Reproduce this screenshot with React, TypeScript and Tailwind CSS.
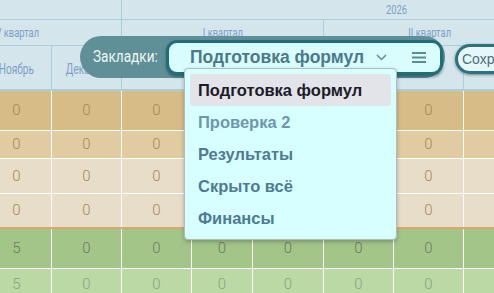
import React from "react";

const W = [70, 70, 70, 61, 71, 70, 70, 70];
const ROBOTO = { fontFamily: 'Roboto, "Liberation Sans", sans-serif' };
const SANS = { fontFamily: '"Liberation Sans", Arial, sans-serif' };

type Row = { h: string; bg: string; color: string; vals: string[]; border: string };

const rows: Row[] = [
  { h: "h-[40px]", bg: "bg-[#d7bc88]", color: "text-[#a48a56]", vals: ["0", "0", "0", "0", "0", "0", "0", ""], border: "border-b border-white" },
  { h: "h-[28px]", bg: "bg-[#e1cca2]", color: "text-[#a48a56]", vals: ["0", "0", "0", "0", "0", "0", "0", ""], border: "border-b border-white" },
  { h: "h-[35px]", bg: "bg-[#e8ddc9]", color: "text-[#a48a56]", vals: ["0", "0", "0", "0", "0", "0", "0", ""], border: "border-b border-white" },
  { h: "h-[35px]", bg: "bg-[#e8ddc9]", color: "text-[#a48a56]", vals: ["0", "0", "0", "0", "0", "0", "0", ""], border: "border-b-2 border-[#d8a86e]" },
  { h: "h-[40px]", bg: "bg-[#a3c688]", color: "text-[#6c7a68]", vals: ["5", "0", "0", "0", "0", "0", "0", ""], border: "border-b border-white" },
  { h: "h-[30px]", bg: "bg-[#bad9a5]", color: "text-[#88a57e]", vals: ["5", "0", "0", "0", "0", "0", "0", ""], border: "" },
];

function Cond({ children }: { children: React.ReactNode }) {
  return <span className="inline-block whitespace-nowrap scale-x-[0.72]">{children}</span>;
}

export default function App() {
  return (
    <div className="relative w-[494px] h-[293px] overflow-hidden bg-[#d4e5ec]">
      <div className="ml-[-18px] flex flex-col w-[800px]">
        {/* header row 1 */}
        <div className="flex h-[20px] border-b border-[#a9cfdc] text-[13px] text-[#7f9fc6]" style={ROBOTO}>
          <div className="w-[140px] shrink-0 border-r border-[#a9cfdc]" />
          <div className="w-[550px] shrink-0 flex items-center justify-center">
            <Cond>2026</Cond>
          </div>
        </div>
        {/* header row 2 */}
        <div className="flex h-[26px] border-b border-[#a9cfdc] text-[13px] text-[#7f9fc6]" style={ROBOTO}>
          <div className="w-[140px] shrink-0 border-r border-[#a9cfdc] flex items-center justify-center pr-[70px]">
            <Cond>IV квартал</Cond>
          </div>
          <div className="w-[202px] shrink-0 border-r border-[#a9cfdc] flex items-center justify-center">
            <Cond>I квартал</Cond>
          </div>
          <div className="w-[212px] shrink-0 flex items-center justify-center">
            <Cond>II квартал</Cond>
          </div>
        </div>
        {/* header row 3 */}
        <div className="flex h-[45px] border-b-2 border-[#a5d0df] text-[14px] text-[#7f9fc6]" style={ROBOTO}>
          {["Ноябрь", "Декабрь", "Январь", "Февраль", "Март", "Апрель", "Май", "Июнь"].map((m, i) => (
            <div
              key={m}
              className="shrink-0 flex items-center justify-center border-r border-[#a9cfdc] pt-[3px]"
              style={{ width: W[i] }}
            >
              <Cond>{m}</Cond>
            </div>
          ))}
        </div>
        {/* body */}
        {rows.map((r, ri) => (
          <div key={ri} className={`flex ${r.h} ${r.bg} ${r.border}`}>
            {r.vals.map((v, i) => (
              <div
                key={i}
                className={`shrink-0 flex items-center justify-center border-r border-white text-[15px] font-light ${r.color}`}
                style={{ width: W[i], ...ROBOTO }}
              >
                {v}
              </div>
            ))}
          </div>
        ))}
      </div>

      {/* toolbar */}
      <div className="absolute left-[80px] top-[36px] h-[42px] w-[365px] rounded-full bg-[#5f9098] flex items-center pl-[13px] pr-[2px]">
        <div className="w-[62px] shrink-0 mr-[11px] text-[17px] text-[#eef5f5]" style={ROBOTO}>
          <span className="inline-block whitespace-nowrap origin-left scale-x-[0.8]">Закладки:</span>
        </div>
        <div className="flex-1 h-[35px] rounded-[11px] border-[3px] border-[#236c7a] bg-[#d9fcfd] shadow-[0_2px_3px_rgba(0,40,50,0.45)] flex items-center pl-[21px] pr-[14px]">
          <span className="text-[17.5px] font-bold text-[#4c798b] whitespace-nowrap" style={SANS}>Подготовка формул</span>
          <svg className="ml-[12px] shrink-0" width="11" height="7" viewBox="0 0 11 7">
            <path d="M1 1 L5.5 5.5 L10 1" fill="none" stroke="#5f8c9b" strokeWidth="1.5" />
          </svg>
          <div className="flex-1" />
          <svg className="shrink-0" width="14" height="11" viewBox="0 0 14 11">
            <rect x="0" y="0" width="14" height="2" fill="#5b8b95" />
            <rect x="0" y="4.5" width="14" height="2" fill="#5b8b95" />
            <rect x="0" y="9" width="14" height="2" fill="#5b8b95" />
          </svg>
        </div>
      </div>

      {/* save button */}
      <div className="absolute left-[455px] top-[44px] h-[30px] w-[90px] rounded-full border-[3px] border-[#2d7280] bg-[#e6f7f9] shadow-[0_1px_3px_rgba(0,40,50,0.5)] flex items-center pl-[4px]">
        <span className="text-[14px] text-[#4a6f7d] whitespace-nowrap" style={SANS}>Сохранить</span>
      </div>

      {/* dropdown */}
      <div className="absolute left-[184px] top-[68px] w-[213px] rounded-[4px] border border-[#b5b9bb] bg-[#d8ffff] shadow-[0_2px_4px_rgba(0,0,0,0.25)] p-[5px]" style={SANS}>
        <div className="h-[32px] rounded-[3px] bg-[#e3e3ea] flex items-center pl-[8px] text-[16.5px] font-bold text-[#1c1c28]">Подготовка формул</div>
        <div className="h-[32px] flex items-center pl-[8px] text-[16.5px] font-bold text-[#6e97ae]">Проверка 2</div>
        <div className="h-[32px] flex items-center pl-[8px] text-[16.5px] font-bold text-[#4e7b94]">Результаты</div>
        <div className="h-[32px] flex items-center pl-[8px] text-[16.5px] font-bold text-[#4e7b94]">Скрыто всё</div>
        <div className="h-[32px] flex items-center pl-[8px] text-[16.5px] font-bold text-[#4e7b94]">Финансы</div>
      </div>
    </div>
  );
}
